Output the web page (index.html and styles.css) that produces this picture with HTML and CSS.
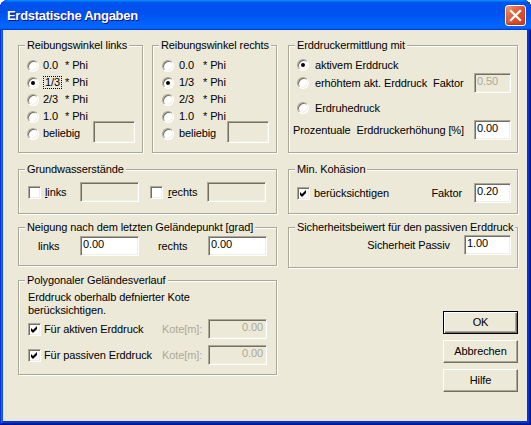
FILE: index.html
```html
<!DOCTYPE html>
<html>
<head>
<meta charset="utf-8">
<link rel="stylesheet" href="styles.css">
</head>
<body>
<div class="window">
  <div class="titlebar">
    <span class="title">Erdstatische Angaben</span>
    <div class="close">
      <svg width="13" height="13" viewBox="0 0 13 13"><path d="M2 2 L11 11 M11 2 L2 11" stroke="#fff" stroke-width="2.2" stroke-linecap="square"/></svg>
    </div>
  </div>
  <div class="client">
    <div class="col-left">
      <div class="row-top">
        <div class="group g-top">
          <div class="gtitle">Reibungswinkel links</div>
          <div class="opts">
            <div class="opt"><span class="radio"></span><span class="val">0.0</span><span>* Phi</span></div>
            <div class="opt"><span class="radio on"></span><span class="val"><span class="focus">1/3</span></span><span>* Phi</span></div>
            <div class="opt"><span class="radio"></span><span class="val">2/3</span><span>* Phi</span></div>
            <div class="opt"><span class="radio"></span><span class="val">1.0</span><span>* Phi</span></div>
            <div class="opt"><span class="radio"></span><span>beliebig</span><span class="edit dis w42 tall"></span></div>
          </div>
        </div>
        <div class="group g-top g2">
          <div class="gtitle">Reibungswinkel rechts</div>
          <div class="opts">
            <div class="opt"><span class="radio"></span><span class="val">0.0</span><span>* Phi</span></div>
            <div class="opt"><span class="radio on"></span><span class="val">1/3</span><span>* Phi</span></div>
            <div class="opt"><span class="radio"></span><span class="val">2/3</span><span>* Phi</span></div>
            <div class="opt"><span class="radio"></span><span class="val">1.0</span><span>* Phi</span></div>
            <div class="opt"><span class="radio"></span><span>beliebig</span><span class="edit dis w42 tall"></span></div>
          </div>
        </div>
      </div>
      <div class="group g-grund">
        <div class="gtitle">Grundwasserstände</div>
        <div class="line grund-row">
          <span class="cb"></span><span class="lbl-l"><u>l</u>inks</span><span class="edit dis w59"></span>
          <span class="cb cb-r"></span><span class="lbl-r"><u>r</u>echts</span><span class="edit dis w59"></span>
        </div>
      </div>
      <div class="group g-neig">
        <div class="gtitle">Neigung nach dem letzten Geländepunkt [grad]</div>
        <div class="line neig-row">
          <span class="n-l">links</span><span class="edit w59">0.00</span>
          <span class="n-r">rechts</span><span class="edit w59">0.00</span>
        </div>
      </div>
      <div class="group g-poly">
        <div class="gtitle">Polygonaler Geländesverlauf</div>
        <div class="poly-text">
          <div>Erddruck oberhalb defnierter Kote</div>
          <div>berücksichtigen.</div>
        </div>
        <div class="line poly-row first">
          <span class="cb"><svg width="11" height="11" viewBox="0 0 11 11"><path d="M2 4 L4 6 L8 2 L8 5 L4 9 L2 7 Z" fill="#000"/></svg></span>
          <span class="p-lbl">Für aktiven Erddruck</span><span class="kote">Kote[m]:</span><span class="edit dis w59 right">0.00</span>
        </div>
        <div class="line poly-row second">
          <span class="cb"><svg width="11" height="11" viewBox="0 0 11 11"><path d="M2 4 L4 6 L8 2 L8 5 L4 9 L2 7 Z" fill="#000"/></svg></span>
          <span class="p-lbl">Für passiven Erddruck</span><span class="kote">Kote[m]:</span><span class="edit dis w59 right">0.00</span>
        </div>
      </div>
    </div>
    <div class="col-right">
      <div class="group g-erd">
        <div class="gtitle">Erddruckermittlung mit</div>
        <div class="e-row r1"><span class="radio on"></span><span>aktivem Erddruck</span></div>
        <div class="e-row r2"><span class="radio"></span><span class="pre">erhöhtem akt. Erddruck  Faktor</span><span class="edit dis w37 grey">0.50</span></div>
        <div class="e-row r3"><span class="radio"></span><span>Erdruhedruck</span></div>
        <div class="e-row r4"><span class="pre">Prozentuale  Erddruckerhöhung [%]</span><span class="edit w37">0.00</span></div>
      </div>
      <div class="group g-koh">
        <div class="gtitle">Min. Kohäsion</div>
        <div class="line koh-row">
          <span class="cb"><svg width="11" height="11" viewBox="0 0 11 11"><path d="M2 4 L4 6 L8 2 L8 5 L4 9 L2 7 Z" fill="#000"/></svg></span>
          <span>berücksichtigen</span>
          <span class="faktor">Faktor</span><span class="edit w37">0.20</span>
        </div>
      </div>
      <div class="group g-sich">
        <div class="gtitle">Sicherheitsbeiwert für den passiven Erddruck</div>
        <div class="line sich-row">
          <span class="s-lbl">Sicherheit Passiv</span><span class="edit w47">1.00</span>
        </div>
      </div>
      <div class="btns">
        <div class="btn default">OK</div>
        <div class="btn">Abbrechen</div>
        <div class="btn">Hilfe</div>
      </div>
    </div>
  </div>
</div>
</body>
</html>
```
FILE: styles.css
```css
* { box-sizing: border-box; }
html, body { margin: 0; padding: 0; background: #ffffff; }
body {
  font-family: "Liberation Sans", Arial, sans-serif;
  font-size: 11px;
  line-height: 13px;
  letter-spacing: -0.1px;
  color: #000;
}

.window {
  width: 531px;
  height: 425px;
  display: flex;
  flex-direction: column;
  background: #0831d9;
  border-radius: 8px 8px 0 0;
  overflow: hidden;
  box-shadow: inset -1px -1px #00138c, inset 1px 1px #0831d9, inset -2px -2px #001ea0, inset 2px 2px #166aee, inset -3px -3px #003bda, inset 3px 3px #0855dd;
}

.titlebar {
  height: 30px;
  flex: none;
  display: flex;
  align-items: flex-start;
  padding: 0 5px 0 7px;
  border-radius: 8px 8px 0 0;
  background: linear-gradient(180deg, #0997ff, #0053ee 8%, #0050ee 40%, #0066ff 88%, #0066ff 93%, #005bff 95%, #003dd7 96%, #003dd7);
}
.title {
  flex: 1;
  color: #fff;
  font-weight: bold;
  font-size: 13px;
  letter-spacing: -0.3px;
  line-height: 16px;
  margin-top: 8px;
  text-shadow: 1px 1px #0f1089;
}
.close {
  width: 21px;
  height: 21px;
  margin-top: 5px;
  border: 1px solid #fff;
  border-radius: 3px;
  display: flex;
  align-items: center;
  justify-content: center;
  background: linear-gradient(135deg, #f3a58c 0%, #e4704c 28%, #d9502f 60%, #c63c1e 100%);
  box-shadow: inset 0 -1px 2px 0 #b8341a;
}

.client {
  flex: 1;
  margin: 0 4px 4px 3px;
  background: #ece9d8;
  display: flex;
  gap: 11px;
  padding: 15px 0 0 15px;
}
.col-left { width: 259px; display: flex; flex-direction: column; }
.col-right { width: 230px; display: flex; flex-direction: column; }
.row-top { display: flex; gap: 9px; }

.group {
  border: 1px solid #aca899;
  box-shadow: inset 1px 1px #fff, 1px 1px #fff;
}
.gtitle {
  width: max-content;
  height: 13px;
  margin: -7px 0 0 6px;
  padding: 0 2px;
  background: #ece9d8;
}

.g-top { width: 125px; height: 108px; }
.opts { margin-top: 5px; }
.opt { display: flex; align-items: center; height: 17px; padding-left: 8px; }
.g2 .opt { padding-left: 9px; }
.opt .radio { margin-right: 4px; }
.g2 .opt .radio { margin-right: 5px; }
.val { width: 22px; flex: none; }
.g2 .val { width: 24px; }
.focus { display: inline-block; border: 1px dotted #000; padding: 0 1px; line-height: 11px; margin-left: 0; }
.opt .edit.tall { margin-left: auto; margin-right: 7px; height: 22px; margin-bottom: 4px; }

.radio {
  flex: none;
  width: 12px;
  height: 12px;
  border-radius: 50%;
  background: #fff;
  border: 1px solid;
  border-color: #aca899 #fff #fff #aca899;
  box-shadow: inset 1px 1px #716f64, inset -1px -1px #f1efe2;
  display: flex;
  align-items: center;
  justify-content: center;
}
.radio.on::after {
  content: "";
  width: 4px;
  height: 4px;
  border-radius: 50%;
  background: #000;
}

.cb {
  flex: none;
  width: 13px;
  height: 13px;
  background: #fff;
  border: 1px solid;
  border-color: #aca899 #fff #fff #aca899;
  box-shadow: inset 1px 1px #716f64, inset -1px -1px #f1efe2;
  display: flex;
  align-items: center;
  justify-content: center;
}

.edit {
  flex: none;
  height: 20px;
  background: #fff;
  border: 1px solid;
  border-color: #aca899 #fff #fff #aca899;
  box-shadow: inset 1px 1px #716f64, inset -1px -1px #f1efe2;
  padding: 1px 2px 0 2px;
  line-height: 13px;
  white-space: nowrap;
}
.edit.dis { background: #ece9d8; color: #aca899; }
.edit.right { text-align: right; padding-right: 3px; }
.w37 { width: 37px; }
.w42 { width: 42px; }
.w47 { width: 47px; }
.w59 { width: 59px; }

.line { display: flex; align-items: center; height: 20px; }

.g-grund { height: 45px; margin-top: 16px; }
.grund-row { margin-top: 6px; padding-left: 9px; }
.grund-row .cb { margin-right: 4px; }
.lbl-l { width: 35px; }
.cb-r { margin-left: 11px; }
.grund-row .cb-r { margin-right: 5px; }
.lbl-r { width: 39px; }

.g-neig { height: 39px; margin-top: 13px; }
.neig-row { margin-top: 2px; padding-left: 19px; }
.n-l { width: 42px; }
.n-r { width: 50px; margin-left: 19px; }

.g-poly { height: 95px; margin-top: 14px; }
.poly-text { margin-top: 4px; padding-left: 9px; }
.poly-row { padding-left: 9px; }
.poly-row.first { margin-top: 2px; }
.poly-row.second { margin-top: 6px; }
.poly-row .cb { margin-right: 3px; }
.p-lbl { width: 118px; }
.kote { width: 46px; color: #aca899; }

.g-erd { height: 108px; }
.e-row { display: flex; align-items: center; padding-left: 8px; }
.e-row .radio { margin-right: 6px; }
.e-row .edit { margin-left: auto; margin-right: 6px; }
.e-row.r1 { height: 16px; margin-top: 5px; }
.e-row.r2 { height: 20px; }
.e-row.r3 { height: 16px; margin-top: 7px; }
.e-row.r4 { height: 20px; margin-top: 4px; padding-left: 4px; }
.pre { white-space: pre; }

.g-koh { height: 45px; margin-top: 16px; }
.koh-row { margin-top: 7px; padding-left: 8px; }
.koh-row .cb { margin-right: 4px; }
.faktor { margin-left: auto; margin-right: 12px; }
.koh-row .edit { margin-right: 6px; }

.g-sich { height: 41px; margin-top: 13px; }
.sich-row { margin-top: 1px; justify-content: flex-end; padding-right: 6px; }
.s-lbl { margin-right: 14px; }

.btns { display: flex; flex-direction: column; align-items: flex-end; gap: 6px; margin-top: 43px; }
.btn {
  width: 75px;
  height: 23px;
  display: flex;
  align-items: center;
  justify-content: center;
  background: #ece9d8;
  border: 1px solid;
  border-color: #fff #716f64 #716f64 #fff;
  box-shadow: inset -1px -1px #aca899;
}
.btn.default {
  border-color: #000;
  box-shadow: inset 1px 1px #fff, inset -1px -1px #716f64, inset -2px -2px #aca899;
}
```
